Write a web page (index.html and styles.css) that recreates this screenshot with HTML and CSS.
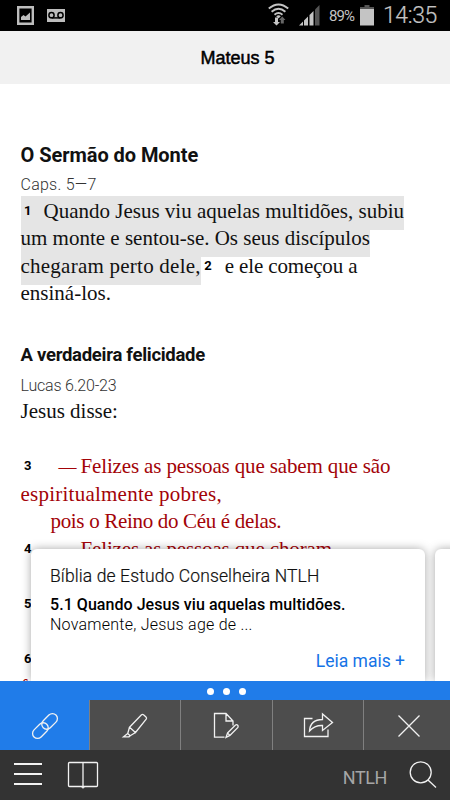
FILE: index.html
```html
<!DOCTYPE html>
<html lang="pt-BR">
<head>
    <meta charset="UTF-8">
    <meta name="viewport" content="width=device-width, initial-scale=1.0">
    <title>Mateus 5</title>
    <link rel="stylesheet" href="styles.css">
</head>
<body>
    <div class="status-bar">
        <svg class="icon-picture" width="17" height="19" viewBox="0 0 17 19">
            <path d="M1.2 1.2h14.6v16.6H1.2z" fill="none" stroke="#bdbdbd" stroke-width="2.4"/>
            <path d="M4 14v-3l2.500-2 2 1.500L13 6.500V14z" fill="#bdbdbd"/>
        </svg>
        <svg class="icon-voicemail" width="18" height="13" viewBox="0 0 18 13">
            <path d="M0 0h18v13H0z" fill="#bdbdbd"/>
            <g fill="none" stroke="#000" stroke-width="1.500"><circle cx="4.500" cy="6.200" r="2.600"/><circle cx="13.500" cy="6.200" r="2.600"/><path d="M4.500 8.900h9"/></g>
        </svg>
        <svg class="icon-wifi" width="21" height="23" viewBox="0 0 21 23">
            <g fill="none" stroke="#c4c4c4" stroke-width="1.900"><path d="M.8 5.500Q10.500-2.700 20.200 5.500M3.600 8.700q6.900-5.700 13.800 0M6.500 11.700q4-3.200 8 0"/></g>
            <path d="M8.200 13.200q2.300-1.700 4.600 0L10.500 15.500z" fill="#c4c4c4"/>
            <path d="M7 14.500h3V19h2l-3.500 3.600L5 19h2z" fill="#c4c4c4"/>
            <path d="M12.800 20.500V17H11l3.300-3.500 3.200 3.500h-1.700v3.500z" fill="#666"/>
        </svg>
        <svg class="icon-signal" width="21" height="21" viewBox="0 0 21 21">
            <path d="M0 20.500l4-4v4zM5 20.500v-5l4-4v9zM10.500 20.500V10l4-4v14.500z" fill="#c4c4c4"/>
            <path d="M16 20.500v-16L20.500 0v20.500z" fill="#555"/>
        </svg>
        <span class="battery-text">89%</span>
        <svg class="icon-battery" width="14" height="21" viewBox="0 0 14 21">
            <path d="M4.500 0h5v2H14v3H0V2h4.500z" fill="#555"/>
            <path d="M0 4h14v16.500H0z" fill="#c4c4c4"/>
        </svg>
        <span class="clock">14:35</span>
    </div>

    <header class="title-bar">Mateus 5</header>

    <main class="reader">
        <h2>O Sermão do Monte</h2>
        <p class="reference caps">Caps. 5—7</p>
        <div class="verses">
            <div class="line"><span class="marked"><b class="num">1</b>Quando Jesus viu aquelas multidões, subiu</span></div>
            <div class="line"><span class="marked">um monte e sentou-se. Os seus discípulos</span></div>
            <div class="line"><span class="marked wide">chegaram perto dele,</span><b class="num second-num">2</b><span class="tight">e ele começou a</span></div>
            <div class="line">ensiná-los.</div>
        </div>

        <h2 class="second">A verdadeira felicidade</h2>
        <p class="reference">Lucas 6.20-23</p>
        <div class="line disse">Jesus disse:</div>

        <div class="verses red">
            <div class="line tight"><b class="num">3</b><span class="dash">—</span>Felizes as pessoas que sabem que são</div>
            <div class="line wide">espiritualmente pobres,</div>
            <div class="line indent">pois o Reino do Céu é delas.</div>
            <div class="line tight"><b class="num">4</b><span class="dash">—</span>Felizes as pessoas que choram,</div>
            <div class="line"></div>
            <div class="line"><b class="num">5</b></div>
            <div class="line"></div>
            <div class="line"><b class="num">6</b></div>
            <div class="line">f</div>
        </div>

        <div class="cards">
            <article class="card">
                <div class="card-source">Bíblia de Estudo Conselheira NTLH</div>
                <div class="card-title">5.1 Quando Jesus viu aquelas multidões.</div>
                <div class="card-text">Novamente, Jesus age de ...</div>
                <a class="card-more">Leia mais +</a>
            </article>
            <article class="card"></article>
        </div>
    </main>

    <div class="pager"><i></i><i></i><i></i></div>

    <div class="tools">
        <div class="tool active">
            <svg width="30" height="30" viewBox="0 0 30 30">
                <g transform="rotate(-45 15 15)">
                    <rect x="-.5" y="10" width="18" height="10" rx="5"/>
                    <rect x="12.500" y="10" width="18" height="10" rx="5"/>
                </g>
            </svg>
        </div>
        <div class="tool">
            <svg width="30" height="30" viewBox="0 0 30 30">
                <path d="M21.500 3.700q1-.8 2 0l2.500 2.300q1 1 .2 2.200L15.500 21.500l-6-5.200zM9.500 16.300L7.700 22.500l2.500 2.200 5.300-3.200M7.700 22.500L3.500 25.800H9l1.200-1.100"/>
            </svg>
        </div>
        <div class="tool">
            <svg width="30" height="30" viewBox="0 0 30 30">
                <path d="M13.500 26.200H3.500V2.500H15l7 7.500v4.500M15 2.500V10h7M16.500 22l8-8q1.300-.7 2.200.2t.2 2.200l-8 8-3.900 2.100zM16.500 22l2.400 2.400"/>
            </svg>
        </div>
        <div class="tool">
            <svg width="32" height="30" viewBox="0 0 32 30">
                <path d="M10.500 7.500H2.500v18h23.500V18.500M7.500 20C8 12.500 13 8.500 20.500 8.500V3L30.500 11.500l-10 8v-5C15 14.300 11 16 7.500 20z"/>
            </svg>
        </div>
        <div class="tool">
            <svg width="30" height="30" viewBox="0 0 30 30">
                <path d="M4.500 4.500l21 21M25.500 4.500l-21 21"/>
            </svg>
        </div>
    </div>

    <nav class="bottom-bar">
        <svg class="icon-menu" width="30" height="26" viewBox="0 0 30 26">
            <path d="M1 3h28M1 13h28M1 23h28"/>
        </svg>
        <svg class="icon-book" width="32" height="28" viewBox="0 0 32 28">
            <path d="M2.500 1.500h27q1 0 1 1v22q0 1-1 1h-27q-1 0-1-1v-22q0-1 1-1zM16 1.500v26M14.500 26h3"/>
        </svg>
        <span class="version">NTLH</span>
        <svg class="icon-search" width="28" height="28" viewBox="0 0 28 28">
            <circle cx="11.700" cy="11.300" r="10.500"/>
            <path d="M19 19l8 7.500"/>
        </svg>
    </nav>
</body>
</html>
```
FILE: styles.css
```css
* {
    box-sizing: border-box;
}

body {
    margin: 0;
    width: 450px;
    height: 800px;
    overflow: hidden;
    display: flex;
    flex-direction: column;
    background: #fff;
    font-family: Roboto, sans-serif;
    color: #111;
}

/* status bar */
.status-bar {
    height: 31px;
    flex: none;
    display: flex;
    align-items: center;
    padding-left: 17px;
    background: #000;
    color: #c4c4c4;
}

.icon-voicemail {
    margin-left: 13px;
}

.icon-wifi {
    margin-left: 203px;
    margin-top: -2px;
}

.icon-signal {
    margin-left: 10px;
}

.battery-text {
    width: 27px;
    flex: none;
    margin-left: 9px;
    font-size: 15px;
    letter-spacing: -0.9px;
    white-space: nowrap;
}

.icon-battery {
    margin-left: 4px;
}

.clock {
    margin-left: 9px;
    font-size: 23px;
    font-weight: 300;
    letter-spacing: -0.4px;
    -webkit-text-stroke: 0.2px #c4c4c4;
}

.title-bar {
    height: 53px;
    flex: none;
    padding-left: 25px;
    background: #f1f1f1;
    color: #000;
    font-family: "Liberation Sans", sans-serif;
    font-size: 18px;
    line-height: 54px;
    text-align: center;
    -webkit-text-stroke: 0.5px #000;
}

/* text */
.reader {
    position: relative;
    flex: 1;
    min-height: 0;
    overflow: hidden;
    padding: 57px 0 0 20.5px;
}

h2 {
    margin: 0;
    height: 27px;
    font-size: 20px;
    line-height: 28px;
    font-weight: 700;
    letter-spacing: -0.05px;
    white-space: nowrap;
}

h2.second {
    margin-top: 33px;
    font-size: 18.5px;
    line-height: 29px;
    letter-spacing: -0.28px;
}

.reference {
    margin: 0;
    height: 30px;
    font-size: 16px;
    font-weight: 300;
    line-height: 35px;
    letter-spacing: -0.2px;
    color: #333;
}

.reference.caps {
    height: 29.5px;
    line-height: 33px;
    letter-spacing: 0.25px;
}

.line {
    height: 27.6px;
    font-family: "Liberation Serif", serif;
    font-size: 21px;
    line-height: 27.6px;
    color: #111;
    white-space: nowrap;
}

.wide {
    letter-spacing: 0.24px;
}

.tight {
    letter-spacing: -0.14px;
}

.marked {
    padding: 3px 0 7px;
    background: #e5e5e5;
}

.num {
    display: inline-block;
    width: 23px;
    padding-left: 3.5px;
    font-family: Roboto, sans-serif;
    font-size: 13px;
    line-height: 14px;
    color: #000;
    letter-spacing: 0;
    vertical-align: 3px;
}

.second-num {
    width: 24px;
}

.disse {
    margin-bottom: 27.5px;
}

.red .line {
    color: #a30308;
}

.red .num {
    width: 38px;
}

.dash {
    display: inline-block;
    width: 22px;
    font-size: 18px;
    letter-spacing: 0;
}

.line.indent {
    padding-left: 30px;
    letter-spacing: -0.32px;
}

/* study cards */
.cards {
    position: absolute;
    left: 31px;
    bottom: 0;
    height: 132px;
    display: flex;
    gap: 10px;
}

.card {
    width: 394px;
    flex: none;
    display: flex;
    flex-direction: column;
    padding: 14px 20px 0 19px;
    background: #fff;
    border-radius: 6px 6px 0 0;
    box-shadow: 0 0 10px rgba(0, 0, 0, 0.35);
}

.card-source {
    font-size: 17.5px;
    font-weight: 300;
    line-height: 26px;
    letter-spacing: 0.12px;
    -webkit-text-stroke: 0.2px #111;
}

.card-title {
    margin-top: 5px;
    font-size: 16px;
    font-weight: 500;
    line-height: 21px;
    letter-spacing: 0.05px;
    color: #000;
}

.card-text {
    font-size: 16px;
    font-weight: 300;
    line-height: 20px;
    letter-spacing: 0.24px;
    color: #000;
}

.card-more {
    align-self: flex-end;
    margin-top: 14px;
    font-size: 17.5px;
    line-height: 24px;
    color: #1573e6;
}

.pager {
    height: 19px;
    flex: none;
    display: flex;
    justify-content: center;
    align-items: center;
    gap: 9px;
    padding: 2px 0 0 2px;
    background: #207ce9;
}

.pager i {
    width: 7px;
    height: 7px;
    border-radius: 50%;
    background: #fff;
}

/* toolbars */
.tools {
    height: 50px;
    flex: none;
    display: flex;
    overflow: hidden;
    background: #4d4d4d;
}

.tool {
    flex: 0 0 91.3px;
    display: flex;
    align-items: center;
    justify-content: center;
    padding-top: 2px;
    border-left: 1px solid #808080;
}

.tool.active {
    flex: 0 0 89px;
    border-left: none;
    background: #207ce9;
}

svg {
    flex: none;
}

.tool svg,
.bottom-bar svg {
    fill: none;
    stroke: #f2f2f2;
    stroke-width: 1.3;
}

.bottom-bar {
    height: 50px;
    flex: none;
    display: flex;
    align-items: center;
    padding: 0 13px 0 13px;
    background: #333;
}

.icon-menu {
    margin-top: -2px;
}

.bottom-bar .icon-menu {
    stroke-width: 1.8;
}

.icon-book {
    margin-left: 24px;
    margin-top: -1px;
}

.version {
    margin-left: auto;
    padding-top: 5px;
    font-size: 18px;
    letter-spacing: -0.4px;
    color: #a6a6a6;
}

.icon-search {
    margin-left: 22px;
}
```
